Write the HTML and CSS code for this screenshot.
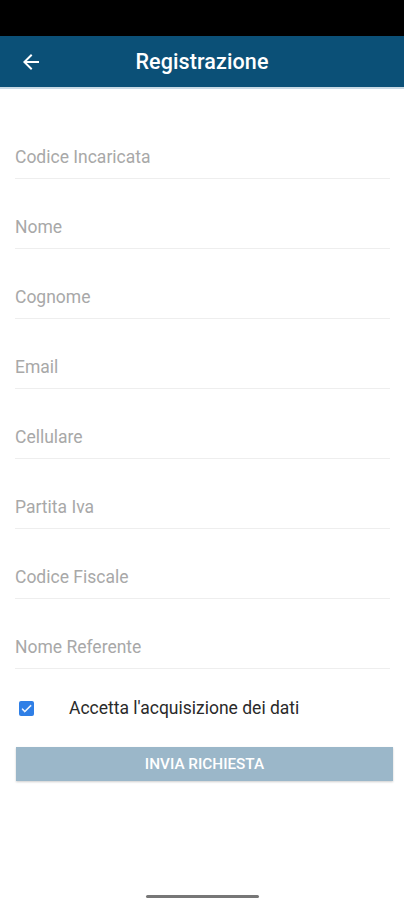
FILE: index.html
```html
<!DOCTYPE html>
<html lang="it">
<head>
<meta charset="utf-8">
<link rel="stylesheet" href="styles.css">
</head>
<body>
<div class="screen">
  <div class="statusbar"></div>
  <header class="appbar">
    <svg class="back" width="24" height="24" viewBox="0 0 24 24"><path d="M20 11H7.83l5.59-5.59L12 4l-8 8 8 8 1.41-1.41L7.83 13H20v-2z" fill="#fff"/></svg>
    <h1 class="title">Registrazione</h1>
  </header>
  <form class="form">
    <div class="field"><span class="label">Codice Incaricata</span></div>
    <div class="field"><span class="label">Nome</span></div>
    <div class="field"><span class="label">Cognome</span></div>
    <div class="field"><span class="label">Email</span></div>
    <div class="field"><span class="label">Cellulare</span></div>
    <div class="field"><span class="label">Partita Iva</span></div>
    <div class="field"><span class="label">Codice Fiscale</span></div>
    <div class="field"><span class="label">Nome Referente</span></div>
    <div class="consent">
      <span class="check"><svg width="13" height="13" viewBox="0 0 24 24"><path d="M9 16.2L4.8 12l-1.4 1.4L9 19 21 7l-1.4-1.4L9 16.2z" fill="#fff" stroke="#fff" stroke-width="1"/></svg></span>
      <span class="consent-text">Accetta l'acquisizione dei dati</span>
    </div>
    <div class="submit">INVIA RICHIESTA</div>
  </form>
  <div class="homebar"></div>
</div>
</body>
</html>
```
FILE: styles.css
```css
* { box-sizing: border-box; }
html, body { margin: 0; padding: 0; background: #fff; }
body { font-family: Roboto, "Noto Sans", sans-serif; }
.screen { position: relative; width: 404px; height: 900px; overflow: hidden; background: #fff; }
.statusbar { height: 36px; background: #000; }
.appbar {
  height: 53px; background: #0b5077; display: flex; align-items: center;
  position: relative; border-bottom: 2px solid #c9d9e4;
}
.back { margin-left: 19px; flex: none; }
.title {
  margin: 0; flex: 1; text-align: center; color: #fff; font-size: 21.5px;
  font-weight: 500; padding-right: 43px; letter-spacing: 0.1px;
}
.form { padding-top: 20px; display: flex; flex-direction: column; }
.field {
  height: 70px; margin: 0 14px 0 15px; display: flex; align-items: flex-end;
  padding-bottom: 11px; border-bottom: 1px solid #eeeeee;
}
.label { font-size: 17.5px; line-height: 20px; color: #a8a8a8; }
.consent { height: 36px; margin-top: 21px; display: flex; align-items: center; padding-left: 19px; }
.check {
  width: 15px; height: 15px; background: #2f7fe6; border-radius: 2px;
  display: flex; align-items: center; justify-content: center; margin-top: 1px;
}
.consent-text { margin-left: 35px; font-size: 17.5px; color: #2a2a2a; }
.submit {
  margin: 21px 11px 0 16px; height: 34px; background: #9bb7c9; color: #fff;
  font-size: 15.3px; font-weight: 500; display: flex; align-items: center; justify-content: center;
  box-shadow: 0 1px 2px rgba(0,0,0,0.2);
}
.homebar {
  position: absolute; left: 146px; top: 895px; width: 113px; height: 3px;
  background: #777; border-radius: 2px;
}
```
